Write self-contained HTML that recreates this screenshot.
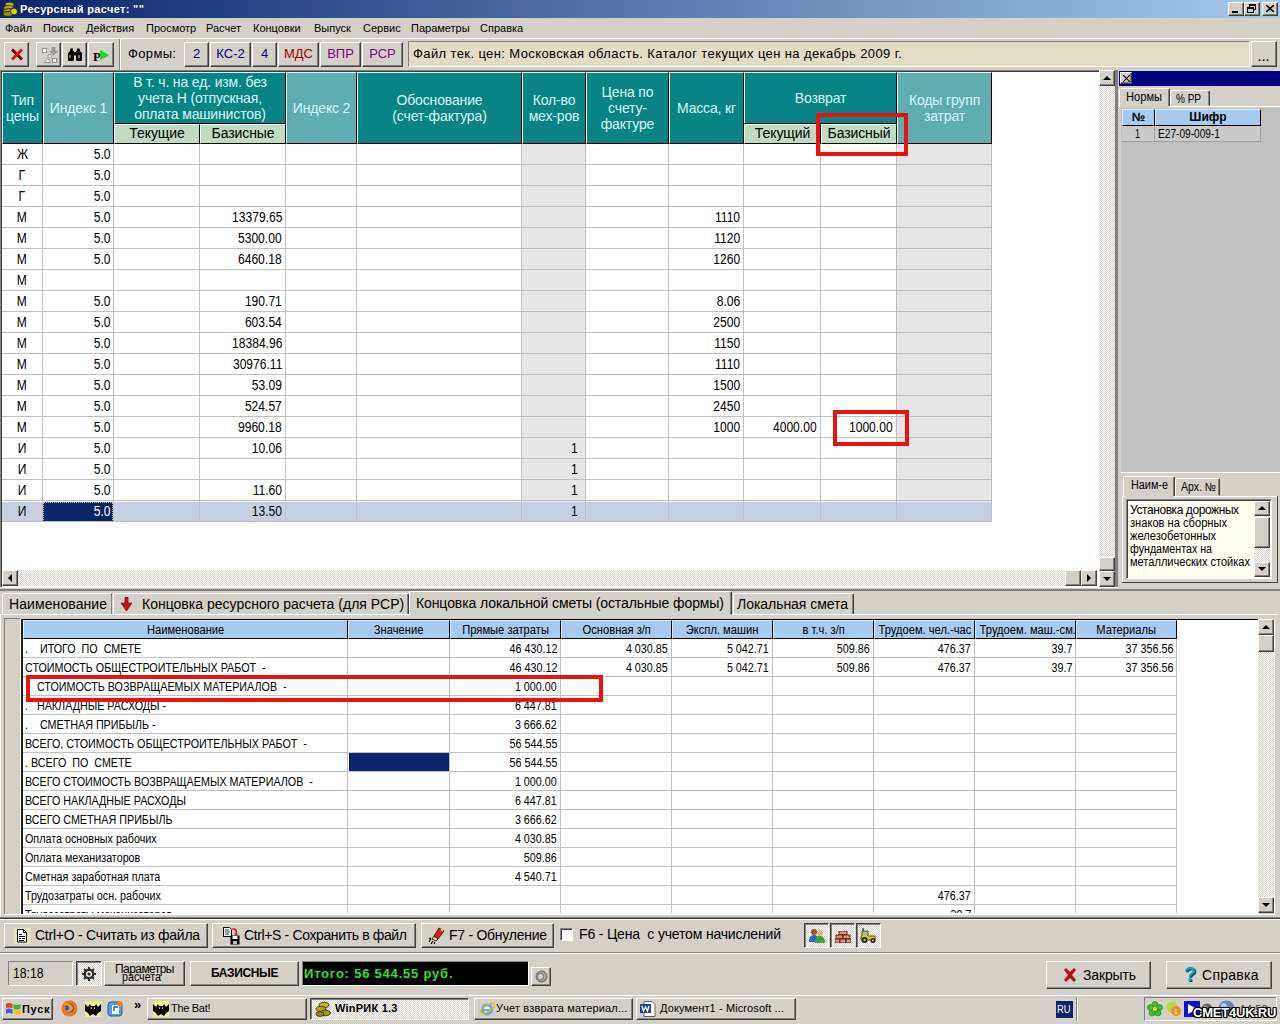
<!DOCTYPE html><html lang="ru"><head><meta charset="utf-8"><title>Ресурсный расчет</title><style>
*{box-sizing:border-box;margin:0;padding:0}
html,body{width:1280px;height:1024px;overflow:hidden;background:#d4d0c8;font-family:"Liberation Sans",sans-serif;font-size:11px;color:#000}
.a{position:absolute}
.t{position:absolute;white-space:nowrap;line-height:1;transform-origin:0 50%}
.btn{position:absolute;background:#d4d0c8;border:1px solid;border-color:#fff #404040 #404040 #fff;box-shadow:inset -1px -1px 0 #808080}
.prs{position:absolute;border:1px solid;border-color:#404040 #fff #fff #404040;box-shadow:inset 1px 1px 0 #808080}
.sunk{position:absolute;border:1px solid;border-color:#808080 #fff #fff #808080}
.hd{position:absolute;color:#d4f6f6;font-size:14px;letter-spacing:-.15px;text-align:center;line-height:16px;display:flex;align-items:center;justify-content:center;padding-bottom:1px;border-left:1px solid #d8f8f8;border-top:1px solid #d8f8f8;border-right:1px solid #000;border-bottom:1px solid #000}
.dk{background:#0a8386}
.lt{background:#5fadb0}
.sh{position:absolute;background:#c0dcc0;color:#000;font-size:14px;letter-spacing:-.1px;text-align:center;line-height:17px;border-left:1px solid #f0faf0;border-top:1px solid #f0faf0;border-right:1px solid #000;border-bottom:1px solid #000}
.c{position:absolute;font-size:14px;line-height:20px;height:20px;white-space:nowrap}
.c span{display:inline-block;transform:scaleX(.862)}
.r{text-align:right;padding-right:3px}
.r span{transform-origin:100% 50%}
.ce{text-align:center}
.b{position:absolute;font-size:12px;line-height:20px;height:19px;white-space:nowrap}
.b span{display:inline-block;transform:scaleX(.895);transform-origin:0 50%}
.b.r span{transform-origin:100% 50%}
.bh{position:absolute;background:#a6caf0;font-size:12px;line-height:18px;text-align:center;border-right:1px solid #000;border-bottom:1px solid #000;border-top:1px solid #dcecfc;border-left:1px solid #dcecfc;white-space:nowrap}
.bh span{display:inline-block;transform:scaleX(.93)}
.track{position:absolute;background-color:#fff;background-image:linear-gradient(45deg,#d4d0c8 25%,transparent 25%,transparent 75%,#d4d0c8 75%),linear-gradient(45deg,#d4d0c8 25%,transparent 25%,transparent 75%,#d4d0c8 75%);background-size:2px 2px;background-position:0 0,1px 1px}
.tab{position:absolute;background:#d4d0c8;border:1px solid;border-color:#fff #404040 transparent #fff;box-shadow:inset -1px 0 0 #808080;border-radius:2px 2px 0 0}
.vl{position:absolute;width:1px;background:#c0c0c0}
.hl{position:absolute;height:1px;background:#c0c0c0}
.red{position:absolute;border:4px solid #e81212}
</style></head><body>
<div class="a" style="left:0px;top:0px;width:1280px;height:18px;background:linear-gradient(90deg,#0a246a,#a6caf0)"></div>
<svg class="a" style="left:2px;top:1px" width="16" height="16" viewBox="0 0 16 16"><g stroke="#2c2400" stroke-width=".9"><ellipse cx="7.500" cy="3.800" rx="4.500" ry="2.600" fill="#c4b428"/><ellipse cx="6.500" cy="7" rx="5" ry="2.600" fill="#b4a420"/><ellipse cx="6.500" cy="10.300" rx="5.500" ry="2.700" fill="#a89818"/><ellipse cx="6" cy="13" rx="5" ry="2.400" fill="#9c8c14"/><circle cx="12" cy="10.500" r="3.500" fill="#d0d020"/></g></svg>
<div class="t" style="left:20px;top:4px;font-size:11px;font-weight:bold;letter-spacing:0.34px;color:#fff">Ресурсный расчет: ""</div>
<div class="btn" style="left:1228px;top:2px;width:16px;height:14px;"><div class="a" style="left:3px;top:8px;width:6px;height:2px;background:#000"></div></div>
<div class="btn" style="left:1244px;top:2px;width:16px;height:14px;"><div class="a" style="left:4px;top:1px;width:7px;height:6px;border:1px solid #000;border-top-width:2px"></div><div class="a" style="left:2px;top:4px;width:7px;height:6px;border:1px solid #000;border-top-width:2px;background:#d4d0c8"></div></div>
<div class="btn" style="left:1262px;top:2px;width:16px;height:14px;"><svg class="a" style="left:3px;top:2px" width="8" height="7" viewBox="0 0 8 7"><path d="M0 0L8 7M8 0L0 7" stroke="#000" stroke-width="1.6"/></svg></div>
<div class="t" style="left:5px;top:23px;font-size:11px">Файл</div>
<div class="t" style="left:43px;top:23px;font-size:11px">Поиск</div>
<div class="t" style="left:86px;top:23px;font-size:11px">Действия</div>
<div class="t" style="left:146px;top:23px;font-size:11px">Просмотр</div>
<div class="t" style="left:206px;top:23px;font-size:11px">Расчет</div>
<div class="t" style="left:253px;top:23px;font-size:11px">Концовки</div>
<div class="t" style="left:314px;top:23px;font-size:11px">Выпуск</div>
<div class="t" style="left:363px;top:23px;font-size:11px">Сервис</div>
<div class="t" style="left:411px;top:23px;font-size:11px">Параметры</div>
<div class="t" style="left:480px;top:23px;font-size:11px">Справка</div>
<div class="a" style="left:0px;top:38px;width:1280px;height:1px;background:#fff"></div>
<div class="btn" style="left:4px;top:42px;width:25px;height:25px;"><svg class="a" style="left:5px;top:5px" width="14" height="13" viewBox="0 0 14 13"><path d="M2 1.500L12 11.500" stroke="#7a0a0a" stroke-width="3"/><path d="M12 1.500L2 11.500" stroke="#d81010" stroke-width="2.800"/></svg></div>
<div class="btn" style="left:36px;top:42px;width:25px;height:25px;"><svg class="a" style="left:3px;top:2px" width="19" height="19" viewBox="0 0 19 19"><rect x="2.500" y="3.500" width="4" height="4" fill="#f8f8f8" stroke="#909090"/><path d="M11.500 2h4v4h2.500l-4.500 4.500L9 6h2.500z" fill="#9a9a9a"/><circle cx="9.700" cy="11.300" r="1.900" fill="#f8f8f8" stroke="#909090"/><path d="M7.500 13.500l3.200 4H4.300z" fill="#f8f8f8" stroke="#909090"/><rect x="12.500" y="13.500" width="4" height="4" fill="#f8f8f8" stroke="#909090"/></svg></div>
<div class="btn" style="left:62px;top:42px;width:25px;height:25px;"><svg class="a" style="left:4px;top:4px" width="16" height="14" viewBox="0 0 16 14"><path d="M3.500 1.500h2.500v2l1 1v7.500a2.500 2.500 0 0 1-6 0V6l2-2zM12.500 1.500H10v2l-1 1v7.500a2.500 2.500 0 0 0 6 0V6l-2-2z" fill="#000"/><rect x="6.500" y="5" width="3" height="3.500" fill="#000"/><path d="M3 8v3M12 8v3" stroke="#e8e8e8" stroke-width="1"/></svg></div>
<div class="btn" style="left:88px;top:42px;width:26px;height:25px;"><div class="t" style="left:4px;top:7px;font-family:'Liberation Serif',serif;font-weight:bold;font-size:13px">P</div><div class="a" style="left:12px;top:8px;width:0;height:0;border-top:5px solid transparent;border-bottom:5px solid transparent;border-left:9px solid #c8b8e8"></div><div class="a" style="left:11px;top:7px;width:0;height:0;border-top:5px solid transparent;border-bottom:5px solid transparent;border-left:9px solid #10e010"></div></div>
<div class="a" style="left:119px;top:39px;width:1px;height:32px;background:#808080"></div>
<div class="a" style="left:120px;top:39px;width:1px;height:32px;background:#fff"></div>
<div class="t" style="left:128px;top:47px;font-size:13px;letter-spacing:0.35px;">Формы:</div>
<div class="btn" style="left:184px;top:42px;width:25px;height:25px;"><div style="text-align:center;font-size:13px;line-height:22px;color:#000080">2</div></div>
<div class="btn" style="left:210px;top:42px;width:41px;height:25px;"><div style="text-align:center;font-size:13px;line-height:22px;color:#000080">КС-2</div></div>
<div class="btn" style="left:252px;top:42px;width:25px;height:25px;"><div style="text-align:center;font-size:13px;line-height:22px;color:#000080">4</div></div>
<div class="btn" style="left:278px;top:42px;width:41px;height:25px;"><div style="text-align:center;font-size:13px;line-height:22px;color:#a00000">МДС</div></div>
<div class="btn" style="left:320px;top:42px;width:41px;height:25px;"><div style="text-align:center;font-size:13px;line-height:22px;color:#800080">ВПР</div></div>
<div class="btn" style="left:362px;top:42px;width:41px;height:25px;"><div style="text-align:center;font-size:13px;line-height:22px;color:#800080">РСР</div></div>
<div class="sunk" style="left:408px;top:41px;width:842px;height:26px;background:#e1ddc4;border-color:#808080 #fff #fff #808080"><div class="t" style="left:4px;top:5px;font-size:13px;letter-spacing:0.39px;">Файл тек. цен: Московская область. Каталог текущих цен на декабрь 2009 г.</div></div>
<div class="btn" style="left:1251px;top:41px;width:26px;height:26px;"><div class="t" style="left:6px;top:10px;font-size:11px;font-weight:bold;letter-spacing:1px">...</div></div>
<div class="a" style="left:0px;top:70px;width:1116px;height:518px;background:#fff;border:1px solid;border-color:#808080 #fff #fff #808080;box-shadow:inset 1px 1px 0 #404040"></div>
<div class="hd dk" style="left:2px;top:72px;width:41px;height:72px;"><span>Тип<br>цены</span></div>
<div class="hd lt" style="left:43px;top:72px;width:71px;height:72px;"><span>Индекс 1</span></div>
<div class="hd lt" style="left:286px;top:72px;width:71px;height:72px;"><span>Индекс 2</span></div>
<div class="hd dk" style="left:357px;top:72px;width:165px;height:72px;"><span>Обоснование<br>(счет-фактура)</span></div>
<div class="hd dk" style="left:522px;top:72px;width:64px;height:72px;"><span>Кол-во<br>мех-ров</span></div>
<div class="hd dk" style="left:586px;top:72px;width:83px;height:72px;"><span>Цена по<br>счету-<br>фактуре</span></div>
<div class="hd dk" style="left:669px;top:72px;width:75px;height:72px;"><span>Масса, кг</span></div>
<div class="hd lt" style="left:897px;top:72px;width:95px;height:72px;"><span>Коды групп<br>затрат</span></div>
<div class="hd dk" style="left:114px;top:72px;width:172px;height:52px;"><span>В т. ч. на ед. изм. без<br>учета Н (отпускная,<br>оплата машинистов)</span></div>
<div class="sh" style="left:114px;top:124px;width:86px;height:20px;">Текущие</div>
<div class="sh" style="left:200px;top:124px;width:86px;height:20px;">Базисные</div>
<div class="hd dk" style="left:744px;top:72px;width:153px;height:52px;"><span>Возврат</span></div>
<div class="sh" style="left:744px;top:124px;width:77px;height:20px;">Текущий</div>
<div class="sh" style="left:821px;top:124px;width:76px;height:20px;">Базисный</div>
<div class="a" style="left:522px;top:144px;width:64px;height:378px;background:#e6e6e6"></div>
<div class="a" style="left:897px;top:144px;width:95px;height:378px;background:#e6e6e6"></div>
<div class="a" style="left:2px;top:502px;width:990px;height:20px;background:#c6d0e2"></div>
<div class="a" style="left:43px;top:502px;width:70px;height:20px;background:#0a246a;border:1px dotted #d0c090"></div>
<div class="vl" style="left:42px;top:144px;width:1px;height:378px;"></div>
<div class="vl" style="left:113px;top:144px;width:1px;height:378px;"></div>
<div class="vl" style="left:199px;top:144px;width:1px;height:378px;"></div>
<div class="vl" style="left:285px;top:144px;width:1px;height:378px;"></div>
<div class="vl" style="left:356px;top:144px;width:1px;height:378px;"></div>
<div class="vl" style="left:521px;top:144px;width:1px;height:378px;"></div>
<div class="vl" style="left:585px;top:144px;width:1px;height:378px;"></div>
<div class="vl" style="left:668px;top:144px;width:1px;height:378px;"></div>
<div class="vl" style="left:743px;top:144px;width:1px;height:378px;"></div>
<div class="vl" style="left:820px;top:144px;width:1px;height:378px;"></div>
<div class="vl" style="left:896px;top:144px;width:1px;height:378px;"></div>
<div class="vl" style="left:991px;top:144px;width:1px;height:378px;"></div>
<div class="hl" style="left:2px;top:164px;width:990px;height:1px;"></div>
<div class="hl" style="left:2px;top:185px;width:990px;height:1px;"></div>
<div class="hl" style="left:2px;top:206px;width:990px;height:1px;"></div>
<div class="hl" style="left:2px;top:227px;width:990px;height:1px;"></div>
<div class="hl" style="left:2px;top:248px;width:990px;height:1px;"></div>
<div class="hl" style="left:2px;top:269px;width:990px;height:1px;"></div>
<div class="hl" style="left:2px;top:290px;width:990px;height:1px;"></div>
<div class="hl" style="left:2px;top:311px;width:990px;height:1px;"></div>
<div class="hl" style="left:2px;top:332px;width:990px;height:1px;"></div>
<div class="hl" style="left:2px;top:353px;width:990px;height:1px;"></div>
<div class="hl" style="left:2px;top:374px;width:990px;height:1px;"></div>
<div class="hl" style="left:2px;top:395px;width:990px;height:1px;"></div>
<div class="hl" style="left:2px;top:416px;width:990px;height:1px;"></div>
<div class="hl" style="left:2px;top:437px;width:990px;height:1px;"></div>
<div class="hl" style="left:2px;top:458px;width:990px;height:1px;"></div>
<div class="hl" style="left:2px;top:479px;width:990px;height:1px;"></div>
<div class="hl" style="left:2px;top:500px;width:990px;height:1px;"></div>
<div class="hl" style="left:2px;top:521px;width:990px;height:1px;"></div>
<div class="c ce" style="left:2px;top:144px;width:40px;"><span>Ж</span></div>
<div class="c r" style="left:43px;top:144px;width:70px;"><span>5.0</span></div>
<div class="c ce" style="left:2px;top:165px;width:40px;"><span>Г</span></div>
<div class="c r" style="left:43px;top:165px;width:70px;"><span>5.0</span></div>
<div class="c ce" style="left:2px;top:186px;width:40px;"><span>Г</span></div>
<div class="c r" style="left:43px;top:186px;width:70px;"><span>5.0</span></div>
<div class="c ce" style="left:2px;top:207px;width:40px;"><span>М</span></div>
<div class="c r" style="left:43px;top:207px;width:70px;"><span>5.0</span></div>
<div class="c r" style="left:200px;top:207px;width:85px;"><span>13379.65</span></div>
<div class="c r" style="left:669px;top:207px;width:74px;"><span>1110</span></div>
<div class="c ce" style="left:2px;top:228px;width:40px;"><span>М</span></div>
<div class="c r" style="left:43px;top:228px;width:70px;"><span>5.0</span></div>
<div class="c r" style="left:200px;top:228px;width:85px;"><span>5300.00</span></div>
<div class="c r" style="left:669px;top:228px;width:74px;"><span>1120</span></div>
<div class="c ce" style="left:2px;top:249px;width:40px;"><span>М</span></div>
<div class="c r" style="left:43px;top:249px;width:70px;"><span>5.0</span></div>
<div class="c r" style="left:200px;top:249px;width:85px;"><span>6460.18</span></div>
<div class="c r" style="left:669px;top:249px;width:74px;"><span>1260</span></div>
<div class="c ce" style="left:2px;top:270px;width:40px;"><span>М</span></div>
<div class="c ce" style="left:2px;top:291px;width:40px;"><span>М</span></div>
<div class="c r" style="left:43px;top:291px;width:70px;"><span>5.0</span></div>
<div class="c r" style="left:200px;top:291px;width:85px;"><span>190.71</span></div>
<div class="c r" style="left:669px;top:291px;width:74px;"><span>8.06</span></div>
<div class="c ce" style="left:2px;top:312px;width:40px;"><span>М</span></div>
<div class="c r" style="left:43px;top:312px;width:70px;"><span>5.0</span></div>
<div class="c r" style="left:200px;top:312px;width:85px;"><span>603.54</span></div>
<div class="c r" style="left:669px;top:312px;width:74px;"><span>2500</span></div>
<div class="c ce" style="left:2px;top:333px;width:40px;"><span>М</span></div>
<div class="c r" style="left:43px;top:333px;width:70px;"><span>5.0</span></div>
<div class="c r" style="left:200px;top:333px;width:85px;"><span>18384.96</span></div>
<div class="c r" style="left:669px;top:333px;width:74px;"><span>1150</span></div>
<div class="c ce" style="left:2px;top:354px;width:40px;"><span>М</span></div>
<div class="c r" style="left:43px;top:354px;width:70px;"><span>5.0</span></div>
<div class="c r" style="left:200px;top:354px;width:85px;"><span>30976.11</span></div>
<div class="c r" style="left:669px;top:354px;width:74px;"><span>1110</span></div>
<div class="c ce" style="left:2px;top:375px;width:40px;"><span>М</span></div>
<div class="c r" style="left:43px;top:375px;width:70px;"><span>5.0</span></div>
<div class="c r" style="left:200px;top:375px;width:85px;"><span>53.09</span></div>
<div class="c r" style="left:669px;top:375px;width:74px;"><span>1500</span></div>
<div class="c ce" style="left:2px;top:396px;width:40px;"><span>М</span></div>
<div class="c r" style="left:43px;top:396px;width:70px;"><span>5.0</span></div>
<div class="c r" style="left:200px;top:396px;width:85px;"><span>524.57</span></div>
<div class="c r" style="left:669px;top:396px;width:74px;"><span>2450</span></div>
<div class="c ce" style="left:2px;top:417px;width:40px;"><span>М</span></div>
<div class="c r" style="left:43px;top:417px;width:70px;"><span>5.0</span></div>
<div class="c r" style="left:200px;top:417px;width:85px;"><span>9960.18</span></div>
<div class="c r" style="left:669px;top:417px;width:74px;"><span>1000</span></div>
<div class="c r" style="left:744px;top:417px;width:76px;"><span>4000.00</span></div>
<div class="c r" style="left:821px;top:417px;width:75px;"><span>1000.00</span></div>
<div class="c ce" style="left:2px;top:438px;width:40px;"><span>И</span></div>
<div class="c r" style="left:43px;top:438px;width:70px;"><span>5.0</span></div>
<div class="c r" style="left:200px;top:438px;width:85px;"><span>10.06</span></div>
<div class="c r" style="left:522px;top:438px;width:63px;padding-right:7px"><span>1</span></div>
<div class="c ce" style="left:2px;top:459px;width:40px;"><span>И</span></div>
<div class="c r" style="left:43px;top:459px;width:70px;"><span>5.0</span></div>
<div class="c r" style="left:522px;top:459px;width:63px;padding-right:7px"><span>1</span></div>
<div class="c ce" style="left:2px;top:480px;width:40px;"><span>И</span></div>
<div class="c r" style="left:43px;top:480px;width:70px;"><span>5.0</span></div>
<div class="c r" style="left:200px;top:480px;width:85px;"><span>11.60</span></div>
<div class="c r" style="left:522px;top:480px;width:63px;padding-right:7px"><span>1</span></div>
<div class="c ce" style="left:2px;top:501px;width:40px;"><span>И</span></div>
<div class="c r" style="left:43px;top:501px;width:70px;color:#fff"><span>5.0</span></div>
<div class="c r" style="left:200px;top:501px;width:85px;"><span>13.50</span></div>
<div class="c r" style="left:522px;top:501px;width:63px;padding-right:7px"><span>1</span></div>
<div class="red" style="left:816px;top:113px;width:92px;height:43px;"></div>
<div class="red" style="left:833px;top:410px;width:76px;height:36px;"></div>
<div class="track" style="left:2px;top:570px;width:1095px;height:16px;"></div>
<div class="btn" style="left:2px;top:570px;width:16px;height:16px;"></div>
<div class="a" style="left:8px;top:574px;width:0;height:0;border-top:4px solid transparent;border-bottom:4px solid transparent;border-right:4px solid #000"></div>
<div class="btn" style="left:1081px;top:570px;width:16px;height:16px;"></div>
<div class="a" style="left:1087px;top:574px;width:0;height:0;border-top:4px solid transparent;border-bottom:4px solid transparent;border-left:4px solid #000"></div>
<div class="btn" style="left:1065px;top:570px;width:16px;height:16px;"></div>
<div class="track" style="left:1099px;top:70px;width:16px;height:517px;"></div>
<div class="btn" style="left:1099px;top:70px;width:16px;height:16px;"></div>
<div class="a" style="left:1103px;top:76px;width:0;height:0;border-left:4px solid transparent;border-right:4px solid transparent;border-bottom:4px solid #000"></div>
<div class="btn" style="left:1099px;top:571px;width:16px;height:16px;"></div>
<div class="a" style="left:1103px;top:577px;width:0;height:0;border-left:4px solid transparent;border-right:4px solid transparent;border-top:4px solid #000"></div>
<div class="btn" style="left:1099px;top:557px;width:16px;height:14px;"></div>
<div class="a" style="left:1115px;top:70px;width:3px;height:518px;background:#808080"></div>
<div class="a" style="left:0px;top:587px;width:1280px;height:1px;background:#fff"></div>
<div class="a" style="left:0px;top:588px;width:1280px;height:1px;background:#d4d0c8"></div>
<div class="a" style="left:0px;top:589px;width:1280px;height:2px;background:#808080"></div>
<div class="a" style="left:1118px;top:70px;width:162px;height:518px;background:#d4d0c8"></div>
<div class="a" style="left:1119px;top:71px;width:161px;height:15px;background:#000080"></div>
<div class="btn" style="left:1120px;top:72px;width:12px;height:12px;"><svg class="a" style="left:2px;top:2px" width="7" height="7" viewBox="0 0 7 7"><path d="M0 0L7 7M7 0L0 7" stroke="#000" stroke-width="1.2"/></svg></div>
<div class="tab" style="left:1119px;top:88px;width:51px;height:19px;"><div class="t" style="left:6px;top:2px;font-size:12px;transform:scaleX(0.926);">Нормы</div></div>
<div class="tab" style="left:1170px;top:90px;width:40px;height:16px;"><div class="t" style="left:5px;top:2px;font-size:12px;transform:scaleX(0.833);">% РР</div></div>
<div class="a" style="left:1119px;top:106px;width:161px;height:1px;background:#fff"></div>
<div class="a" style="left:1120px;top:106px;width:49px;height:1px;background:#d4d0c8"></div>
<div class="a" style="left:1121px;top:108px;width:159px;height:364px;background:#c0c0c0"></div>
<div class="bh" style="left:1122px;top:109px;width:33px;height:17px;font-weight:bold;font-size:12px;line-height:15px">№</div>
<div class="bh" style="left:1155px;top:109px;width:106px;height:17px;font-weight:bold;font-size:12px;line-height:15px">Шифр</div>
<div class="a" style="left:1122px;top:126px;width:139px;height:16px;background:#cacaca;border-bottom:1px solid #a0a0a0;border-right:1px solid #a0a0a0"></div>
<div class="a" style="left:1154px;top:126px;width:1px;height:16px;background:#a0a0a0"></div>
<div class="t" style="left:1135px;top:128px;font-size:12px;transform:scaleX(0.749);">1</div>
<div class="t" style="left:1158px;top:128px;font-size:12px;transform:scaleX(0.845);">Е27-09-009-1</div>
<div class="a" style="left:1121px;top:472px;width:159px;height:1px;background:#fff"></div>
<div class="tab" style="left:1123px;top:476px;width:52px;height:21px;"><div class="t" style="left:7px;top:2px;font-size:12px;transform:scaleX(0.903);">Наим-е</div></div>
<div class="tab" style="left:1175px;top:478px;width:45px;height:18px;"><div class="t" style="left:5px;top:2px;font-size:12px;transform:scaleX(0.874);">Арх. №</div></div>
<div class="a" style="left:1122px;top:496px;width:156px;height:1px;background:#fff"></div>
<div class="a" style="left:1124px;top:496px;width:50px;height:1px;background:#d4d0c8"></div>
<div class="a" style="left:1277px;top:496px;width:1px;height:86px;background:#404040"></div>
<div class="a" style="left:1122px;top:582px;width:156px;height:1px;background:#404040"></div>
<div class="a" style="left:1122px;top:496px;width:1px;height:86px;background:#fff"></div>
<div class="a" style="left:1126px;top:499px;width:146px;height:80px;background:#fffcf0;border:1px solid;border-color:#808080 #fff #fff #808080;box-shadow:inset 1px 1px 0 #404040"></div>
<div class="t" style="left:1130px;top:504px;font-size:12px;letter-spacing:-0.42px;">Установка дорожных</div>
<div class="t" style="left:1130px;top:517px;font-size:12px;transform:scaleX(0.927);">знаков на сборных</div>
<div class="t" style="left:1130px;top:530px;font-size:12px;transform:scaleX(0.928);">железобетонных</div>
<div class="t" style="left:1130px;top:543px;font-size:12px;transform:scaleX(0.889);">фундаментах на</div>
<div class="t" style="left:1130px;top:556px;font-size:12px;transform:scaleX(0.920);">металлических стойках</div>
<div class="track" style="left:1254px;top:501px;width:16px;height:76px;"></div>
<div class="btn" style="left:1254px;top:501px;width:16px;height:15px;"></div>
<div class="a" style="left:1258px;top:506px;width:0;height:0;border-left:4px solid transparent;border-right:4px solid transparent;border-bottom:4px solid #000"></div>
<div class="btn" style="left:1254px;top:562px;width:16px;height:15px;"></div>
<div class="a" style="left:1258px;top:567px;width:0;height:0;border-left:4px solid transparent;border-right:4px solid transparent;border-top:4px solid #000"></div>
<div class="btn" style="left:1254px;top:517px;width:16px;height:31px;"></div>
<div class="tab" style="left:2px;top:593px;width:110px;height:22px;box-shadow:none;border-right-color:#404040"><div class="t" style="left:6px;top:3px;font-size:14px;letter-spacing:0.09px;">Наименование</div></div>
<div class="a" style="left:111px;top:595px;width:1px;height:19px;background:#808080"></div>
<div class="tab" style="left:113px;top:593px;width:296px;height:22px;"><div class="t" style="left:28px;top:3px;font-size:14px;letter-spacing:0.01px;">Концовка ресурсного расчета (для РСР)</div><svg class="a" style="left:7px;top:3px" width="11" height="14" viewBox="0 0 11 14"><path d="M4 0h3v6h4l-5.500 8-5.500-8h4z" fill="#c81010" stroke="#600" stroke-width=".6"/></svg></div>
<div class="tab" style="left:733px;top:593px;width:121px;height:22px;"><div class="t" style="left:3px;top:3px;font-size:14px;letter-spacing:-0.04px;">Локальная смета</div></div>
<div class="a" style="left:0px;top:614px;width:1278px;height:1px;background:#fff"></div>
<div class="a" style="left:0px;top:614px;width:1px;height:302px;background:#fff"></div>
<div class="tab" style="left:409px;top:591px;width:323px;height:24px;"><div class="t" style="left:6px;top:4px;font-size:14px;letter-spacing:-0.10px;">Концовка локальной сметы (остальные формы)</div></div>
<div class="a" style="left:23px;top:620px;width:1235px;height:294px;background:#fff"></div>
<div class="a" style="left:21px;top:619px;width:1254px;height:1px;background:#000"></div>
<div class="a" style="left:21px;top:619px;width:2px;height:295px;background:#202020"></div>
<div class="a" style="left:4px;top:618px;width:17px;height:296px;background:#d4d0c8;border-left:1px solid #808080;border-top:1px solid #808080;border-right:1px solid #fff"></div>
<div class="a" style="left:1274px;top:619px;width:1px;height:295px;background:#fff"></div>
<div class="a" style="left:4px;top:914px;width:1271px;height:1px;background:#fff"></div>
<div class="bh" style="left:23px;top:620px;width:325px;height:19px;"><span>Наименование</span></div>
<div class="bh" style="left:348px;top:620px;width:102px;height:19px;"><span>Значение</span></div>
<div class="bh" style="left:450px;top:620px;width:111px;height:19px;"><span>Прямые затраты</span></div>
<div class="bh" style="left:561px;top:620px;width:111px;height:19px;"><span>Основная з/п</span></div>
<div class="bh" style="left:672px;top:620px;width:101px;height:19px;"><span>Экспл. машин</span></div>
<div class="bh" style="left:773px;top:620px;width:101px;height:19px;"><span>в т.ч. з/п</span></div>
<div class="bh" style="left:874px;top:620px;width:101px;height:19px;"><span>Трудоем. чел.-час</span></div>
<div class="bh" style="left:975px;top:620px;width:101px;height:19px;"><span>Трудоем. маш.-см.</span></div>
<div class="bh" style="left:1076px;top:620px;width:101px;height:19px;"><span>Материалы</span></div>
<div class="vl" style="left:347px;top:639px;width:1px;height:274px;"></div>
<div class="vl" style="left:449px;top:639px;width:1px;height:274px;"></div>
<div class="vl" style="left:560px;top:639px;width:1px;height:274px;"></div>
<div class="vl" style="left:671px;top:639px;width:1px;height:274px;"></div>
<div class="vl" style="left:772px;top:639px;width:1px;height:274px;"></div>
<div class="vl" style="left:873px;top:639px;width:1px;height:274px;"></div>
<div class="vl" style="left:974px;top:639px;width:1px;height:274px;"></div>
<div class="vl" style="left:1075px;top:639px;width:1px;height:274px;"></div>
<div class="vl" style="left:1176px;top:639px;width:1px;height:274px;"></div>
<div class="hl" style="left:23px;top:657px;width:1154px;height:1px;"></div>
<div class="hl" style="left:23px;top:676px;width:1154px;height:1px;"></div>
<div class="hl" style="left:23px;top:695px;width:1154px;height:1px;"></div>
<div class="hl" style="left:23px;top:714px;width:1154px;height:1px;"></div>
<div class="hl" style="left:23px;top:733px;width:1154px;height:1px;"></div>
<div class="hl" style="left:23px;top:752px;width:1154px;height:1px;"></div>
<div class="hl" style="left:23px;top:771px;width:1154px;height:1px;"></div>
<div class="hl" style="left:23px;top:790px;width:1154px;height:1px;"></div>
<div class="hl" style="left:23px;top:809px;width:1154px;height:1px;"></div>
<div class="hl" style="left:23px;top:828px;width:1154px;height:1px;"></div>
<div class="hl" style="left:23px;top:847px;width:1154px;height:1px;"></div>
<div class="hl" style="left:23px;top:866px;width:1154px;height:1px;"></div>
<div class="hl" style="left:23px;top:885px;width:1154px;height:1px;"></div>
<div class="hl" style="left:23px;top:904px;width:1154px;height:1px;"></div>
<div class="a" style="left:349px;top:753px;width:100px;height:18px;background:#0a246a"></div>
<div class="a" style="left:23px;top:639px;width:1154px;height:274px;overflow:hidden">
<div class="b" style="left:2px;top:0px"><span>.&nbsp;&nbsp;&nbsp; ИТОГО&nbsp; ПО&nbsp; СМЕТЕ</span></div>
<div class="b r" style="left:427px;top:0px;width:107px;padding-right:0"><span>46 430.12</span></div>
<div class="b r" style="left:538px;top:0px;width:107px;padding-right:0"><span>4 030.85</span></div>
<div class="b r" style="left:649px;top:0px;width:97px;padding-right:0"><span>5 042.71</span></div>
<div class="b r" style="left:750px;top:0px;width:97px;padding-right:0"><span>509.86</span></div>
<div class="b r" style="left:851px;top:0px;width:97px;padding-right:0"><span>476.37</span></div>
<div class="b r" style="left:952px;top:0px;width:97px;padding-right:0"><span>39.7</span></div>
<div class="b r" style="left:1053px;top:0px;width:97px;padding-right:0"><span>37 356.56</span></div>
<div class="b" style="left:2px;top:19px"><span>СТОИМОСТЬ ОБЩЕСТРОИТЕЛЬНЫХ РАБОТ&nbsp; -</span></div>
<div class="b r" style="left:427px;top:19px;width:107px;padding-right:0"><span>46 430.12</span></div>
<div class="b r" style="left:538px;top:19px;width:107px;padding-right:0"><span>4 030.85</span></div>
<div class="b r" style="left:649px;top:19px;width:97px;padding-right:0"><span>5 042.71</span></div>
<div class="b r" style="left:750px;top:19px;width:97px;padding-right:0"><span>509.86</span></div>
<div class="b r" style="left:851px;top:19px;width:97px;padding-right:0"><span>476.37</span></div>
<div class="b r" style="left:952px;top:19px;width:97px;padding-right:0"><span>39.7</span></div>
<div class="b r" style="left:1053px;top:19px;width:97px;padding-right:0"><span>37 356.56</span></div>
<div class="b" style="left:2px;top:38px"><span>&nbsp;&nbsp;&nbsp; СТОИМОСТЬ ВОЗВРАЩАЕМЫХ МАТЕРИАЛОВ&nbsp; -</span></div>
<div class="b r" style="left:427px;top:38px;width:107px;padding-right:0"><span>1 000.00</span></div>
<div class="b" style="left:2px;top:57px"><span>.&nbsp;&nbsp; НАКЛАДНЫЕ РАСХОДЫ -</span></div>
<div class="b r" style="left:427px;top:57px;width:107px;padding-right:0"><span>6 447.81</span></div>
<div class="b" style="left:2px;top:76px"><span>.&nbsp;&nbsp;&nbsp; СМЕТНАЯ ПРИБЫЛЬ -</span></div>
<div class="b r" style="left:427px;top:76px;width:107px;padding-right:0"><span>3 666.62</span></div>
<div class="b" style="left:2px;top:95px"><span>ВСЕГО, СТОИМОСТЬ ОБЩЕСТРОИТЕЛЬНЫХ РАБОТ&nbsp; -</span></div>
<div class="b r" style="left:427px;top:95px;width:107px;padding-right:0"><span>56 544.55</span></div>
<div class="b" style="left:2px;top:114px"><span>. ВСЕГО&nbsp; ПО&nbsp; СМЕТЕ</span></div>
<div class="b r" style="left:427px;top:114px;width:107px;padding-right:0"><span>56 544.55</span></div>
<div class="b" style="left:2px;top:133px"><span>ВСЕГО СТОИМОСТЬ ВОЗВРАЩАЕМЫХ МАТЕРИАЛОВ&nbsp; -</span></div>
<div class="b r" style="left:427px;top:133px;width:107px;padding-right:0"><span>1 000.00</span></div>
<div class="b" style="left:2px;top:152px"><span>ВСЕГО НАКЛАДНЫЕ РАСХОДЫ</span></div>
<div class="b r" style="left:427px;top:152px;width:107px;padding-right:0"><span>6 447.81</span></div>
<div class="b" style="left:2px;top:171px"><span>ВСЕГО СМЕТНАЯ ПРИБЫЛЬ</span></div>
<div class="b r" style="left:427px;top:171px;width:107px;padding-right:0"><span>3 666.62</span></div>
<div class="b" style="left:2px;top:190px"><span>Оплата основных рабочих</span></div>
<div class="b r" style="left:427px;top:190px;width:107px;padding-right:0"><span>4 030.85</span></div>
<div class="b" style="left:2px;top:209px"><span>Оплата механизаторов</span></div>
<div class="b r" style="left:427px;top:209px;width:107px;padding-right:0"><span>509.86</span></div>
<div class="b" style="left:2px;top:228px"><span>Сметная заработная плата</span></div>
<div class="b r" style="left:427px;top:228px;width:107px;padding-right:0"><span>4 540.71</span></div>
<div class="b" style="left:2px;top:247px"><span>Трудозатраты осн. рабочих</span></div>
<div class="b r" style="left:851px;top:247px;width:97px;padding-right:0"><span>476.37</span></div>
<div class="b" style="left:2px;top:266px"><span>Трудозатраты механизаторов</span></div>
<div class="b r" style="left:851px;top:266px;width:97px;padding-right:0"><span>39.7</span></div>
</div>
<div class="red" style="left:26px;top:675px;width:577px;height:27px;"></div>
<div class="track" style="left:1258px;top:619px;width:16px;height:294px;"></div>
<div class="btn" style="left:1258px;top:619px;width:16px;height:16px;"></div>
<div class="a" style="left:1262px;top:625px;width:0;height:0;border-left:4px solid transparent;border-right:4px solid transparent;border-bottom:4px solid #000"></div>
<div class="btn" style="left:1258px;top:897px;width:16px;height:16px;"></div>
<div class="a" style="left:1262px;top:903px;width:0;height:0;border-left:4px solid transparent;border-right:4px solid transparent;border-top:4px solid #000"></div>
<div class="btn" style="left:1258px;top:635px;width:16px;height:17px;"></div>
<div class="a" style="left:0px;top:917px;width:1280px;height:1px;background:#808080"></div>
<div class="a" style="left:0px;top:918px;width:1280px;height:1px;background:#404040"></div>
<div class="a" style="left:0px;top:919px;width:1280px;height:1px;background:#fff"></div>
<div class="btn" style="left:4px;top:923px;width:204px;height:25px;"><svg class="a" style="left:9px;top:4px" width="17" height="16" viewBox="0 0 17 16"><rect width="17" height="16" fill="#f4f4b0" opacity=".55"/><path d="M3.500 1.500h6l3 3v9.500h-9z" fill="#fff" stroke="#000"/><path d="M9.500 1.500v3h3" fill="none" stroke="#000"/><path d="M5 6.500h3M5 8.500h6M5 10.500h2M8 10.500h3M5 12.500h5" stroke="#000"/></svg><div class="t" style="left:30px;top:4px;font-size:14px;letter-spacing:-0.24px;">Ctrl+O - Считать из файла</div></div>
<div class="btn" style="left:212px;top:923px;width:204px;height:25px;"><svg class="a" style="left:10px;top:3px" width="18" height="18" viewBox="0 0 18 18"><path d="M.5.500h6l2 2v7h-8z" fill="#fff" stroke="#000"/><path d="M2 3h4M2 5h5M2 7h4" stroke="#000" stroke-width=".8"/><rect x="7.500" y="8.500" width="9" height="9" fill="#000"/><rect x="9.500" y="9" width="5" height="3" fill="#fff"/><rect x="10" y="14" width="4" height="3" fill="#c0c0c0"/><path d="M8 2c4-2 7 0 6 5l2-1-3 3-2-3 1.500.5c.5-3-1-4.500-4.500-4z" fill="#e01010"/></svg><div class="t" style="left:31px;top:4px;font-size:14px;letter-spacing:-0.37px;">Ctrl+S - Сохранить в файл</div></div>
<div class="btn" style="left:421px;top:923px;width:133px;height:25px;"><svg class="a" style="left:6px;top:3px" width="18" height="18" viewBox="0 0 18 18"><path d="M11 1l5 3-6 8-4-3z" fill="#e02020" stroke="#400" stroke-width=".8"/><path d="M13 2.500l2 1.200" stroke="#f0e040" stroke-width="2"/><path d="M6 9l4 3-2 2-4-2z" fill="#f0d890" stroke="#000" stroke-width=".8"/><path d="M1 15l2-3M3 17l2-3M6 17l1-2M1 12l2-1" stroke="#000" stroke-width="1.200"/></svg><div class="t" style="left:27px;top:4px;font-size:14px;letter-spacing:-0.26px;">F7 - Обнуление</div></div>
<div class="a" style="left:560px;top:928px;width:13px;height:13px;background:#fff;border:1px solid;border-color:#808080 #fff #fff #808080;box-shadow:inset 1px 1px 0 #404040"></div>
<div class="t" style="left:579px;top:927px;font-size:14px;letter-spacing:-0.17px;">F6 - Цена&nbsp; с учетом начислений</div>
<div class="prs track" style="left:804px;top:923px;width:25px;height:25px;"><svg class="a" style="left:4px;top:4px" width="16" height="16" viewBox="0 0 16 16"><circle cx="5" cy="4" r="3" fill="#a05020"/><path d="M0 14c0-5 2-7 5-7s5 2 5 7z" fill="#3060d0"/><circle cx="11" cy="5" r="3" fill="#f0b070"/><path d="M6 15c0-5 2-7 5-7s5 2 5 7z" fill="#40a040"/></svg></div>
<div class="prs track" style="left:830px;top:923px;width:25px;height:25px;"><svg class="a" style="left:4px;top:7px" width="16" height="12" viewBox="0 1 16 12"><rect x="4" y="1" width="8" height="4" fill="#dc9474" stroke="#4a0800" stroke-width=".8"/><rect x="1" y="5" width="7" height="4" fill="#dc9474" stroke="#4a0800" stroke-width=".8"/><rect x="8" y="5" width="7" height="4" fill="#dc9474" stroke="#4a0800" stroke-width=".8"/><rect x="0" y="9" width="5" height="4" fill="#dc9474" stroke="#4a0800" stroke-width=".8"/><rect x="5" y="9" width="6" height="4" fill="#dc9474" stroke="#4a0800" stroke-width=".8"/><rect x="11" y="9" width="5" height="4" fill="#dc9474" stroke="#4a0800" stroke-width=".8"/></svg></div>
<div class="prs track" style="left:856px;top:923px;width:25px;height:25px;"><svg class="a" style="left:3px;top:4px" width="18" height="16" viewBox="0 0 18 16"><path d="M2 3h6v5h7v4H1V8h1z" fill="#d8d020" stroke="#303000" stroke-width=".8"/><rect x="3" y="4" width="3" height="3" fill="#80c0e0"/><circle cx="4.500" cy="12" r="3" fill="#202020"/><circle cx="4.500" cy="12" r="1.200" fill="#d8d020"/><circle cx="13" cy="12.500" r="2.500" fill="#202020"/><circle cx="13" cy="12.500" r="1" fill="#d8d020"/><path d="M3 0v3" stroke="#000"/></svg></div>
<div class="a" style="left:0px;top:952px;width:1280px;height:1px;background:#808080"></div>
<div class="a" style="left:0px;top:953px;width:1280px;height:1px;background:#fff"></div>
<div class="sunk" style="left:8px;top:961px;width:65px;height:25px;"><div class="t" style="left:4px;top:4px;font-size:14px;transform:scaleX(0.871);">18:18</div></div>
<div class="prs track" style="left:76px;top:961px;width:26px;height:25px;"><svg class="a" style="left:5px;top:5px" width="14" height="14" viewBox="0 0 14 14"><circle cx="7" cy="7" r="4.200" fill="none" stroke="#303030" stroke-width="2.400"/><path d="M7 0v14M0 7h14M2 2l10 10M12 2L2 12" stroke="#303030" stroke-width="2"/><circle cx="7" cy="7" r="3" fill="#ecebe6"/><circle cx="7" cy="7" r="1.500" fill="#303030"/></svg></div>
<div class="btn" style="left:104px;top:961px;width:81px;height:25px;"><div class="t" style="left:10px;top:1px;font-size:12px;letter-spacing:-0.56px;">Параметры</div><div class="t" style="left:17px;top:9px;font-size:12px;transform:scaleX(0.891);">расчета</div></div>
<div class="btn" style="left:190px;top:961px;width:109px;height:25px;"><div class="t" style="left:20px;top:5px;font-size:12px;font-weight:bold;letter-spacing:-0.37px;">БАЗИСНЫЕ</div></div>
<div class="a" style="left:302px;top:961px;width:227px;height:25px;background:#000;border:1px solid;border-color:#808080 #fff #fff #808080"><div class="t" style="left:1px;top:5px;font-size:13px;font-weight:bold;letter-spacing:0.79px;color:#30e030;">Итого: 56 544.55 руб.</div></div>
<div class="btn" style="left:531px;top:967px;width:20px;height:19px;"><svg class="a" style="left:3px;top:2px" width="13" height="13" viewBox="0 0 13 13"><circle cx="6.500" cy="6.500" r="5.500" fill="#a0a0a0" stroke="#606060"/><circle cx="5.500" cy="6.500" r="3" fill="#d8d8d8" stroke="#707070"/></svg></div>
<div class="btn" style="left:1046px;top:961px;width:105px;height:28px;"><svg class="a" style="left:16px;top:6px" width="14" height="14" viewBox="0 0 14 14"><path d="M1 2L3 0l4 4 4-4 2 2-4 5 4 5-2 2-4-4-4 4-2-2 4-5z" fill="#b01010"/></svg><div class="t" style="left:36px;top:6px;font-size:14px;letter-spacing:-0.15px;">Закрыть</div></div>
<div class="btn" style="left:1166px;top:961px;width:106px;height:28px;"><div class="t" style="left:17px;top:2px;font-size:20px;font-weight:bold;color:#10a0c0;text-shadow:1px 1px 0 #004060">?</div><div class="t" style="left:35px;top:6px;font-size:14px;letter-spacing:0.27px;">Справка</div></div>
<div class="a" style="left:0px;top:995px;width:1280px;height:1px;background:#fff"></div>
<div class="btn" style="left:2px;top:998px;width:51px;height:22px;"><svg class="a" style="left:3px;top:3px" width="15" height="14" viewBox="0 0 15 14"><path d="M0 2q3-2 6.500 0v4.500q-3.500-2-6.500 0z" fill="#e04020"/><path d="M7.500 2q3.500 2 7 0v4.500q-3.500 2-7 0z" fill="#40b030"/><path d="M0 7.500q3-2 6.500 0V12q-3.500-2-6.500 0z" fill="#3060e0"/><path d="M7.500 7.500q3.500 2 7 0V12q-3.500 2-7 0z" fill="#f0c020"/></svg><div class="t" style="left:19px;top:5px;font-size:11px;font-weight:bold;letter-spacing:0.71px;">Пуск</div></div>
<svg class="a" style="left:61px;top:1000px" width="17" height="17" viewBox="0 0 17 17"><circle cx="8.500" cy="8.500" r="8" fill="#e87818"/><circle cx="8.500" cy="8" r="4.500" fill="#3858b8"/><path d="M2 5c4-3 9-1 10 3-1 4-5 5-8 3 3 0 5-2 4-4-2-2-4-2-6-2z" fill="#f0a020"/></svg>
<svg class="a" style="left:85px;top:1001px" width="16" height="16" viewBox="0 0 16 16"><rect width="16" height="16" fill="#f0f090"/><path d="M0 3l3 3 2-3 1 2h4l1-2 2 3 3-3v7l-3 2-2 3-3-2-3 2-2-3-3-2z" fill="#000"/><circle cx="6.500" cy="7" r=".8" fill="#f0f090"/><circle cx="9.500" cy="7" r=".8" fill="#f0f090"/></svg>
<svg class="a" style="left:107px;top:1001px" width="17" height="16" viewBox="0 0 17 16"><rect x="1" y="1" width="14" height="14" rx="3" fill="#50a0e0" stroke="#2060a0"/><rect x="5" y="4" width="7" height="9" fill="#fff"/><path d="M7 10V6h4" stroke="#2060a0" stroke-width="1.500" fill="none"/><circle cx="13" cy="3" r="2.500" fill="#f08020"/></svg>
<div class="t" style="left:134px;top:998px;font-size:13px;font-weight:bold">»</div>
<div class="btn" style="left:147px;top:998px;width:160px;height:22px;"></div>
<svg class="a" style="left:153px;top:1001px" width="16" height="16" viewBox="0 0 16 16"><rect width="16" height="16" fill="#f0f090"/><path d="M0 3l3 3 2-3 1 2h4l1-2 2 3 3-3v7l-3 2-2 3-3-2-3 2-2-3-3-2z" fill="#000"/><circle cx="6.500" cy="7" r=".8" fill="#f0f090"/><circle cx="9.500" cy="7" r=".8" fill="#f0f090"/></svg>
<div class="t" style="left:171px;top:1003px;font-size:11px;letter-spacing:-0.30px;">The Bat!</div>
<div class="prs track" style="left:310px;top:998px;width:159px;height:22px;"></div>
<svg class="a" style="left:315px;top:1001px" width="17" height="17" viewBox="0 0 17 17"><ellipse cx="9" cy="4" rx="5" ry="2.600" fill="#c4b428" stroke="#2c2400" stroke-width=".8"/><ellipse cx="6" cy="8" rx="5" ry="2.600" fill="#b4a420" stroke="#2c2400" stroke-width=".8"/><ellipse cx="10" cy="12" rx="5.500" ry="2.800" fill="#a89818" stroke="#2c2400" stroke-width=".8"/><ellipse cx="5" cy="13" rx="4" ry="2.400" fill="#9c8c14" stroke="#2c2400" stroke-width=".8"/></svg>
<div class="t" style="left:335px;top:1003px;font-size:11px;font-weight:bold;letter-spacing:0.23px;">WinРИК 1.3</div>
<div class="btn" style="left:474px;top:998px;width:159px;height:22px;"></div>
<svg class="a" style="left:479px;top:1001px" width="17" height="16" viewBox="0 0 17 16"><circle cx="8" cy="8.500" r="6" fill="#58a8f0"/><circle cx="8" cy="8.500" r="3" fill="#fff"/><rect x="5" y="8" width="9" height="2" fill="#58a8f0"/><ellipse cx="8.500" cy="7.500" rx="8" ry="3" fill="none" stroke="#e8b020" stroke-width="1.300" transform="rotate(-30 8.500 7.500)"/></svg>
<div class="t" style="left:496px;top:1003px;font-size:11px;letter-spacing:0.16px;">Учет взврата материал...</div>
<div class="btn" style="left:636px;top:998px;width:160px;height:22px;"></div>
<svg class="a" style="left:640px;top:1001px" width="16" height="16" viewBox="0 0 16 16"><path d="M4 .5h8l3 3v12H4z" fill="#fff" stroke="#606060"/><rect x="0" y="3" width="11" height="9" fill="#2040a0"/><path d="M2 5l1.500 5L5.500 6l2 4L9 5" stroke="#fff" stroke-width="1.300" fill="none"/></svg>
<div class="t" style="left:660px;top:1003px;font-size:11px;letter-spacing:0.10px;">Документ1 - Microsoft ...</div>
<div class="a" style="left:1056px;top:1001px;width:17px;height:17px;background:#0a246a"><div class="t" style="left:1px;top:3px;font-size:11px;transform:scaleX(0.850);color:#fff;">RU</div></div>
<div class="a" style="left:1076px;top:997px;width:1px;height:24px;background:#808080"></div>
<div class="a" style="left:1077px;top:997px;width:1px;height:24px;background:#fff"></div>
<div class="sunk" style="left:1144px;top:997px;width:133px;height:24px;"></div>
<svg class="a" style="left:1147px;top:1001px" width="16" height="16" viewBox="0 0 16 16"><g fill="#40c030" stroke="#208010" stroke-width=".6"><circle cx="8" cy="3.500" r="3"/><circle cx="12.500" cy="6.500" r="3"/><circle cx="11" cy="12" r="3"/><circle cx="5" cy="12" r="3"/><circle cx="3.500" cy="6.500" r="3"/></g><circle cx="8" cy="8" r="2" fill="#f0e020"/></svg>
<svg class="a" style="left:1166px;top:1001px" width="16" height="16" viewBox="0 0 16 16"><circle cx="6" cy="6" r="5.500" fill="#b8d840"/><circle cx="10" cy="10" r="5" fill="#f09020"/><text x="10" y="13" font-size="7" text-anchor="middle" fill="#fff" font-family="Liberation Sans,sans-serif">1</text></svg>
<svg class="a" style="left:1184px;top:1001px" width="16" height="16" viewBox="0 0 16 16"><rect width="16" height="16" fill="#1010d0"/><path d="M4 3l9 5-9 5z" fill="#fff"/></svg>
<svg class="a" style="left:1201px;top:1003px" width="12" height="12" viewBox="0 0 12 12"><circle cx="6" cy="6" r="5.500" fill="#606060"/><circle cx="4.500" cy="4.500" r="2" fill="#a0a0a0"/></svg>
<svg class="a" style="left:1218px;top:1000px" width="17" height="17" viewBox="0 0 17 17"><circle cx="8.500" cy="8.500" r="8" fill="#6088b8"/><circle cx="6" cy="6" r="3" fill="#a8c8e8"/></svg>
<div class="t" style="left:1240px;top:1004px;font-size:11px;color:#404040">14:52</div>
<div class="t" style="left:1193px;top:1006px;font-size:13px;font-weight:bold;color:#fff;letter-spacing:-.2px;text-shadow:-1px -1px 0 #000,1px -1px 0 #000,-1px 1px 0 #000,1px 1px 0 #000,0 1px 0 #000,0 -1px 0 #000,1px 0 0 #000,-1px 0 0 #000">CMET4UK.RU</div>
</body></html>
